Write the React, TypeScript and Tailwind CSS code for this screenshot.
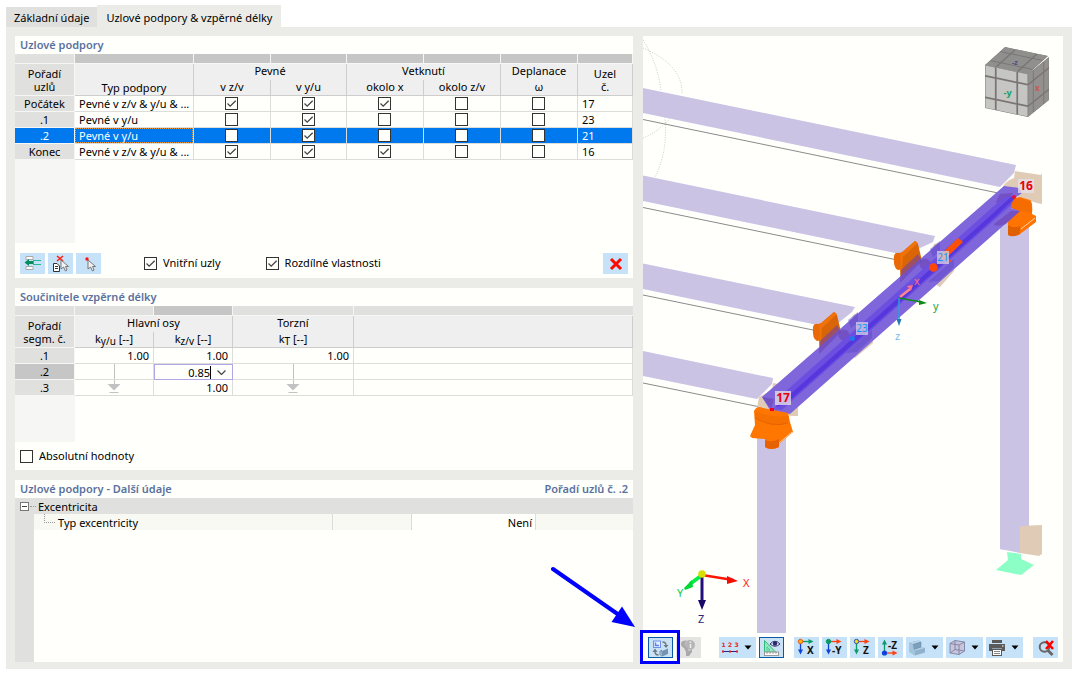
import React from "react";

type Pt = [number, number];

function Check({ id, label, checked = false }: { id?: string; label?: string; checked?: boolean }) {
  return (
    <span className="inline-grid size-[13px] shrink-0 align-top">
      <input
        id={id}
        type="checkbox"
        aria-label={label}
        defaultChecked={checked}
        className="peer [grid-area:1/1] size-[13px] appearance-none border border-[#333] bg-[#fffffc]"
      />
      <svg viewBox="0 0 13 13" className="pointer-events-none invisible [grid-area:1/1] size-[13px] peer-checked:visible">
        <path d="M2.5 6.5 L5.2 9.2 L10.7 3.7" fill="none" stroke="#444" strokeWidth="1.3" />
      </svg>
    </span>
  );
}

function ToolButton({
  label,
  children,
  drop = false,
  active = false,
  className = "",
}: {
  label: string;
  children: React.ReactNode;
  drop?: boolean;
  active?: boolean;
  className?: string;
}) {
  return (
    <button
      type="button"
      aria-label={label}
      className={
        "flex h-[21px] shrink-0 items-center justify-center " +
        (drop ? "w-[37px] gap-[5px] pr-[2px] " : "w-[25px] ") +
        (active ? "border border-[#0a5aa8] bg-[#c9e2f5] " : "bg-[#c5e2f8] ") +
        className
      }
    >
      {children}
      {drop && (
        <svg viewBox="0 0 8 5" className="h-[5px] w-2">
          <path d="M0.5 0.5H7.5L4 4.5Z" fill="#000" />
        </svg>
      )}
    </button>
  );
}

function PanelTitle({ children, right }: { children: React.ReactNode; right?: string }) {
  return (
    <h2 className="flex h-[18px] items-center justify-between px-[5px] font-semibold text-[#5a71a0]">
      <span>{children}</span>
      {right && <span>{right}</span>}
    </h2>
  );
}

const supports = [
  { order: "Počátek", type: "Pevné v z/v & y/u & ...", flags: [true, true, true, false, false], node: "17" },
  { order: ".1", type: "Pevné v y/u", flags: [false, true, false, false, false], node: "23" },
  { order: ".2", type: "Pevné v y/u", flags: [false, true, false, false, false], node: "21", selected: true },
  { order: "Konec", type: "Pevné v z/v & y/u & ...", flags: [true, true, true, false, false], node: "16" },
];
const flagNames = ["v z/v", "v y/u", "okolo x", "okolo z/v", "ω"];

const headCell = "border-r border-[#cdcdcd] p-0 font-normal ";
const subHead = headCell + "border-b align-top leading-[14px]";

function SupportsTable() {
  return (
    <table className="w-full table-fixed border-separate border-spacing-0 text-center leading-[15px]">
      <colgroup>
        <col className="w-[60px]" />
        <col className="w-[119px]" />
        <col className="w-[77px]" />
        <col className="w-[76px]" />
        <col className="w-[77px]" />
        <col className="w-[77px]" />
        <col className="w-[77px]" />
        <col />
      </colgroup>
      <thead>
        <tr aria-hidden="true" className="h-[10px]">
          <td className="border-r border-b border-[#f6f6f4] bg-[#e0e0df] p-0" />
          {[0, 1, 2, 3, 4, 5, 6].map((i) => (
            <td key={i} className="border-r border-b border-[#f6f6f4] bg-[#c6c6c6] p-0" />
          ))}
        </tr>
        <tr className="h-4 bg-[#efefef]">
          <th rowSpan={2} className="border-r border-b border-[#f6f6f4] bg-[#e0e0df] p-0 leading-[13px] font-normal">
            Pořadí
            <br />
            uzlů
          </th>
          <th rowSpan={2} className={headCell + "border-b align-bottom"}>
            Typ podpory
          </th>
          <th colSpan={2} className={headCell + "align-top leading-[14px]"}>
            Pevné
          </th>
          <th colSpan={2} className={headCell + "align-top leading-[14px]"}>
            Vetknutí
          </th>
          <th className={headCell + "align-top leading-[14px]"}>Deplanace</th>
          <th rowSpan={2} className={headCell + "border-b leading-[13px]"}>
            Uzel
            <br />
            č.
          </th>
        </tr>
        <tr className="h-4 bg-[#efefef]">
          {flagNames.map((n) => (
            <th key={n} className={subHead}>
              {n}
            </th>
          ))}
        </tr>
      </thead>
      <tbody>
        {supports.map((r) => (
          <tr key={r.order} className={r.selected ? "h-4 bg-[#0078ee] text-white" : "h-4"}>
            <th
              className={
                "border-r border-b border-[#f6f6f4] p-0 font-normal " + (r.selected ? "bg-[#0078ee]" : "bg-[#e0e0df]")
              }
            >
              {r.order}
            </th>
            <td className="border-r border-b border-[#dcdcda] p-0 text-left">
              <div
                className={
                  r.selected
                    ? "truncate pl-1 outline-1 -outline-offset-1 outline-dotted outline-[#e8963c]"
                    : "truncate pl-1"
                }
              >
                {r.type}
              </div>
            </td>
            {r.flags.map((f, i) => (
              <td key={i} className="border-r border-b border-[#dcdcda] p-0 pl-[31px] text-left leading-none">
                <Check label={r.order + " " + flagNames[i]} checked={f} />
              </td>
            ))}
            <td className="border-r border-b border-[#dcdcda] p-0 pl-1 text-left">{r.node}</td>
          </tr>
        ))}
      </tbody>
    </table>
  );
}

const seg = "border-r border-b border-[#dcdcda] p-0 pr-1";

function DownMark({ end = false }: { end?: boolean }) {
  return (
    <svg viewBox="0 0 14 15" className="mx-auto block h-[15px] w-[14px]">
      {end ? (
        <>
          <path d="M0.5 4H13.5L7 10.5Z" fill="#c2c2c2" />
          <path d="M7.5 0V4M2.5 12.5H11.5" stroke="#c2c2c2" />
        </>
      ) : (
        <path d="M7.5 0V15" stroke="#c2c2c2" />
      )}
    </svg>
  );
}

function FactorsTable() {
  const rowHead = "border-r border-b border-[#f6f6f4] p-0 text-center font-normal ";
  return (
    <table className="w-full table-fixed border-separate border-spacing-0 text-right leading-[15px]">
      <colgroup>
        <col className="w-[60px]" />
        <col className="w-[79px]" />
        <col className="w-[79px]" />
        <col className="w-[121px]" />
        <col />
      </colgroup>
      <thead className="text-center">
        <tr aria-hidden="true" className="h-[10px]">
          <td className="border-r border-b border-[#f6f6f4] bg-[#e0e0df] p-0" />
          <td className="border-r border-b border-[#f6f6f4] bg-[#e0e0df] p-0" />
          <td className="border-r border-b border-[#f6f6f4] bg-[#c6c6c6] p-0" />
          <td className="border-r border-b border-[#f6f6f4] bg-[#e0e0df] p-0" />
          <td className="border-b border-[#f6f6f4] bg-[#e0e0df] p-0" />
        </tr>
        <tr className="h-4 bg-[#efefef]">
          <th rowSpan={2} className="border-r border-b border-[#f6f6f4] bg-[#e0e0df] p-0 leading-[13px] font-normal">
            Pořadí
            <br />
            segm. č.
          </th>
          <th colSpan={2} className={headCell + "align-top leading-[14px]"}>
            Hlavní osy
          </th>
          <th className={headCell + "align-top leading-[14px]"}>Torzní</th>
          <th rowSpan={2} className={headCell + "border-b"} />
        </tr>
        <tr className="h-4 bg-[#efefef]">
          {["y/u", "z/v", "T"].map((s) => (
            <th key={s} className={subHead}>
              k<sub className="bottom-[-2px] text-[10px] leading-none">{s}</sub> [--]
            </th>
          ))}
        </tr>
      </thead>
      <tbody>
        <tr className="h-4">
          <th className={rowHead + "bg-[#e0e0df]"}>.1</th>
          <td className={seg}>1.00</td>
          <td className={seg}>1.00</td>
          <td className={seg}>1.00</td>
          <td className={seg} />
        </tr>
        <tr className="h-4">
          <th className={rowHead + "bg-[#c6c6c6]"}>.2</th>
          <td className="border-r border-b border-[#dcdcda] p-0">
            <DownMark />
          </td>
          <td className="p-0">
            <div className="flex h-4 items-center border border-[#b3a6e6]">
              <input
                aria-label="kz/v segment .2"
                defaultValue="0.85"
                className="h-[14px] w-0 min-w-0 flex-1 bg-transparent text-right outline-none"
              />
              <span className="h-[13px] w-px bg-black" />
              <button type="button" aria-label="Rozbalit" className="flex h-[14px] w-[21px] items-center justify-center">
                <svg viewBox="0 0 9 5" className="h-[5px] w-[9px]">
                  <path d="M0.5 0.5L4.5 4.5L8.5 0.5" fill="none" stroke="#444" strokeWidth="1.2" />
                </svg>
              </button>
            </div>
          </td>
          <td className="border-r border-b border-[#dcdcda] p-0">
            <DownMark />
          </td>
          <td className={seg} />
        </tr>
        <tr className="h-4">
          <th className={rowHead + "bg-[#e0e0df]"}>.3</th>
          <td className="border-r border-b border-[#dcdcda] p-0">
            <DownMark end />
          </td>
          <td className={seg}>1.00</td>
          <td className="border-r border-b border-[#dcdcda] p-0">
            <DownMark end />
          </td>
          <td className={seg} />
        </tr>
      </tbody>
    </table>
  );
}

/* One face of the navigation cube, split into 3 x 3 tiles. */
function CubeFace({ o, u, v, fill }: { o: Pt; u: Pt; v: Pt; fill: string }) {
  const at = (a: number, b: number) => `${o[0] + u[0] * a + v[0] * b},${o[1] + u[1] * a + v[1] * b}`;
  const spans: Pt[] = [
    [0.01, 0.23],
    [0.27, 0.73],
    [0.77, 0.99],
  ];
  return (
    <g>
      <polygon points={[at(0, 0), at(1, 0), at(1, 1), at(0, 1)].join(" ")} fill="#7a7473" />
      {spans.map(([a0, a1], i) =>
        spans.map(([b0, b1], j) => (
          <polygon
            key={i + "-" + j}
            points={[at(a0, b0), at(a1, b0), at(a1, b1), at(a0, b1)].join(" ")}
            fill={fill}
          />
        )),
      )}
    </g>
  );
}

function MidSupport() {
  return (
    <g>
      <path d="M894 256Q895 252 899 253L903 252V269L898 270Q893 268 894 256Z" fill="#e96a05" />
      <path d="M900 254L915 241L918 244L922 261L901 283L900 268Z" fill="#d96507" />
      <path d="M900 254L915 241L918 243L903 257L901 283Z" fill="#f07208" />
    </g>
  );
}

function Tag({ x, y, text, bold = false }: { x: number; y: number; text: string; bold?: boolean }) {
  return (
    <g>
      <rect
        x={x}
        y={y}
        width={bold ? 16 : 12}
        height={bold ? 14 : 13}
        fill={bold ? "#e6dde6" : "#cfcbe6"}
        fillOpacity="0.8"
      />
      <text
        x={x + (bold ? 8 : 6)}
        y={y + (bold ? 11 : 10)}
        textAnchor="middle"
        fontFamily="Noto Sans, sans-serif"
        fontSize={bold ? 12 : 10}
        fontWeight={bold ? 700 : 400}
        fill={bold ? "#e8000c" : "#1596f0"}
      >
        {text}
      </text>
    </g>
  );
}

function Scene() {
  return (
    <svg
      viewBox="643 36 420 597"
      preserveAspectRatio="xMidYMid meet"
      role="img"
      aria-label="Model konstrukce"
      className="min-h-0 w-full flex-1"
    >
      <g fill="none" stroke="#b9b9b5" strokeDasharray="1 1.5" strokeWidth="0.8">
        <path d="M643 40Q658 64 661 91" />
        <path d="M643 48Q683 65 682 94" />
        <path d="M643 138Q660 131 671 117" />
        <path d="M665 117Q668 152 655 177" />
      </g>
      <g fill="#cac3e4">
        <path d="M643 88L1016 165L1014 173L1000 187L643 113Z" />
        <path d="M643 175.500L935 236L933 242L905 255L643 201Z" />
        <path d="M643 263.500L855 307L852 312L832 328L643 289Z" />
        <path d="M643 351L773 378L772 384L757 399L643 376Z" />
        <path d="M757 436H786V633H757Z" />
        <path d="M1000 212H1029V553L1000 549Z" />
      </g>
      <g stroke="#7d7d7d" strokeWidth="0.9">
        <path d="M643 119.500L1003 194" />
        <path d="M643 207.500L895 259.500" />
        <path d="M643 295L813 330" />
        <path d="M643 383L770 409" />
      </g>
      <g fill="#e0cbb7">
        <path d="M1015 171L1041 175L1042 173V204L1037 203L1001 191Q1004 181 1014 178Z" />
        <path d="M1020 526L1042 525V554L1039 556L1020 553Z" />
        <path d="M773 383L798 388V416L791 416L757 408L759 397L772 390Z" />
        <path d="M853 315L858 313V322L873 335L873 343L855 358L846 350Z" />
        <path d="M934 244L939 243V252L955 265L954 271L940 287L928 280Z" />
      </g>
      <path d="M1000 480H1029V524L1020 527V553L1000 549Z" fill="#cac3e4" />
      <path d="M1007 552L1021 554V559L1034 565L1021 575L996 570L1008 560Z" fill="#8bffc5" />

      <MidSupport />
      <g transform="translate(-81 71)">
        <MidSupport />
      </g>

      <path d="M1012 198L1020 197L1030 200Q1033 202 1032 214L1036 216V222L1020 234Q1012 238 1008 234V222L1013 212Z" fill="#ff7300" />
      <path d="M1011 201Q1015 196 1031 202L1032 213Q1024 212 1011 208Z" fill="#f56c00" />
      <path d="M1008 225Q1014 229 1020 226V234Q1012 238 1008 235Z" fill="#e05f00" />
      <path d="M1021 229L1035 218" stroke="#ffd6b0" strokeWidth="1" />

      <path d="M762 397L1004 186L1019 188L1022 193L1012 200L1011 208L1020 211L790 414L770 410Z" fill="#7f66db" />
      <g fill="#6a3fae" fillOpacity="0.55">
        <path d="M996 202L1000 194L1013 193L1008 200L1000 207Z" />
        <path d="M994 224L1011 211L1020 211L1006 224Q998 227 994 225Z" />
        <circle cx="925" cy="264" r="5.500" />
        <circle cx="844" cy="335" r="5.500" />
        <path d="M900 283L922 261L918 254L901 270Z" />
        <path d="M819 354L841 332L837 325L820 341Z" />
        <path d="M762 397L774 399L771 409Z" />
      </g>
      <g fill="#6047c8" fillOpacity="0.5">
        <path d="M846 353L872 330V338L857 352Z" />
        <path d="M928 282L954 259V267L939 281Z" />
        <path d="M848 320L858 312V322L851 328Z" />
        <path d="M930 249L940 241V251L933 257Z" />
      </g>
      <path d="M774 409L786 391L1004 197L1016 196L1010 206L795 398L782 410Z" fill="#6c4fe0" />
      <path d="M776 407L990 216L1012 196L1014 199L992 220L786 404Z" fill="#5537dd" />

      <path d="M938 257L958 238L963 242L944 260Z" fill="#ff5008" />
      <circle cx="933.500" cy="267.500" r="4.300" fill="#ff4808" />
      <path d="M946 259L951 261L947 262" fill="none" stroke="#ff4808" />
      <path d="M754 411Q757 405 763 408L788 413L790 422L793 432L779 444V447Q770 451 765 447V439L752 438L750 436L755 425Z" fill="#ff7600" />
      <path d="M755 411V418Q772 427 788 423L789 416Q770 418 755 411Z" fill="#f57000" />
      <path d="M755 418Q772 428 788 423" fill="none" stroke="#e76200" />
      <path d="M779 443L792 432" stroke="#ffc48f" strokeWidth="1" />
      <path d="M765 440Q772 443 779 439V447Q771 451 765 447Z" fill="#e86100" />
      <rect x="770" y="408" width="4" height="3" fill="#f00022" />
      <circle cx="852.500" cy="338.500" r="2.500" fill="#2276ee" />
      <circle cx="1014" cy="197" r="2" fill="#e01045" />

      <g strokeWidth="1.500">
        <path d="M900 297L910 289" stroke="#ff8590" strokeWidth="2.500" />
        <path d="M907 286L913 285L911 291Z" fill="#ff7080" />
        <path d="M899 298L921 302" stroke="#0b8a17" />
        <path d="M919 300L927 303L919 305Z" fill="#0b8a17" />
        <path d="M899 298V321" stroke="#2c9be0" />
        <path d="M896.500 319H901.500L899 326Z" fill="#2179b8" />
      </g>
      <g fontFamily="Noto Sans, sans-serif" fontSize="11">
        <text x="914" y="285" fill="#ff6f86">x</text>
        <text x="933" y="310" fill="#29a33a">y</text>
        <text x="895" y="340" fill="#77bdf2">z</text>
      </g>

      <Tag x={775} y={391} text="17" bold />
      <Tag x={1018} y={179} text="16" bold />
      <Tag x={856} y={322} text="23" />
      <Tag x={937} y={251} text="21" />

      <CubeFace o={[985, 65]} u={[43, 9]} v={[0, 43]} fill="#c5c5c3" />
      <CubeFace o={[1028, 74]} u={[21, -17]} v={[0, 43]} fill="#93918f" />
      <CubeFace o={[985, 65]} u={[43, 9]} v={[20, -18]} fill="#8f8f8d" />
      <g fontFamily="Noto Sans, sans-serif" fontWeight="700">
        <text x="1003.500" y="96" fontSize="9" fill="#13a062">-y</text>
        <text x="1035" y="91" fontSize="8" fill="#c45a50">x</text>
        <text x="1012" y="65" fontSize="7" fill="#4e4e80">-z</text>
      </g>

      <path d="M702 575L733 580" stroke="#ff1500" strokeWidth="2.600" />
      <path d="M727 576L738 581L727 584Z" fill="#f01000" />
      <path d="M702 575L690 584" stroke="#00f040" strokeWidth="3.500" />
      <path d="M692 580L684 588L685 590L693 587Z" fill="#00d838" />
      <path d="M702 575V603" stroke="#21107c" strokeWidth="3" />
      <path d="M698 600H706L702 610Z" fill="#170a66" />
      <circle cx="702" cy="574" r="3.800" fill="#d6df00" />
      <g fontFamily="Noto Sans, sans-serif" fontSize="11">
        <text x="743" y="587" fill="#ff1a10">X</text>
        <text x="677" y="597" fill="#0ccb45">Y</text>
        <text x="698" y="623" fill="#2c2680">Z</text>
      </g>
    </svg>
  );
}

function AxisIcon({ across, down, dot, text, up = false }: { across: string; down: string; dot: string; text: string; up?: boolean }) {
  return (
    <svg viewBox="0 0 21 19" className="h-[19px] w-[21px]">
      {up ? (
        <>
          <path d="M4.500 15V5" stroke={down} strokeWidth="1.300" />
          <path d="M2 6.500L4.500 1.500L7 6.500Z" fill={down} />
          <path d="M5 15H13" stroke={across} strokeWidth="1.300" />
          <path d="M12.500 12.500L17.500 15L12.500 17.500Z" fill={across} />
          <circle cx="4.500" cy="15" r="2.600" fill={dot} />
        </>
      ) : (
        <>
          <path d="M4.500 4V13" stroke={down} strokeWidth="1.300" />
          <path d="M2 11.500H7L4.500 16.500Z" fill={down} />
          <path d="M5 3.500H13" stroke={across} strokeWidth="1.300" />
          <path d="M12.500 1L17.500 3.500L12.500 6Z" fill={across} />
          <circle
            cx="4.500"
            cy="3.500"
            r="2.200"
            fill={dot}
            stroke={dot === "#ffd900" ? "#2a50c0" : dot === "#ffb800" ? "#f05020" : dot}
          />
        </>
      )}
      <text
        x={text.length > 1 ? 8 : 11}
        y={up ? 10.500 : 15.500}
        fontFamily="Noto Sans, sans-serif"
        fontSize="10"
        fontWeight="700"
        fill="#111"
      >
        {text}
      </text>
    </svg>
  );
}

function ViewToolbar() {
  return (
    <div role="toolbar" aria-label="Zobrazení" className="flex h-[29px] shrink-0 items-center gap-[3px] px-[5px]">
      <div className="relative">
        <ToolButton label="Přepnout pohled" active>
          <svg viewBox="0 0 19 18" className="h-[18px] w-[19px]">
            <rect x="2.500" y="2" width="7" height="6.500" fill="#e8f1ff" stroke="#6f91ee" />
            <path d="M4.500 3.500V6.500H8" fill="none" stroke="#5b82ea" strokeWidth="1.500" />
            <path d="M11.500 3Q15 3 15 6.500" fill="none" stroke="#71787d" strokeWidth="1.400" />
            <path d="M12.500 6H17.500L15 9Z" fill="#71787d" />
            <path d="M7.500 16Q4 16 4 12.500" fill="none" stroke="#71787d" strokeWidth="1.400" />
            <path d="M1.500 13H6.500L4 9.500Z" fill="#71787d" />
            <path d="M8.500 12L11 10.500V12L17 9.500V15L11 17.500L8.500 16Z" fill="#7593b0" />
            <path d="M8.500 12L11 13V17.500L8.500 16Z" fill="#92b3cf" />
          </svg>
        </ToolButton>
        <span className="pointer-events-none absolute -top-[7px] -left-2 h-[34px] w-[40px] border-[3px] border-[#0000fe]" />
        <svg viewBox="0 0 86 62" className="pointer-events-none absolute -top-[71px] -left-[97px] h-[62px] w-[86px]">
          <path d="M2 3L68 49" stroke="#0000fe" strokeWidth="4" strokeLinecap="round" />
          <path d="M84 61L60.500 56L71 40.500Z" fill="#0000fe" />
        </svg>
      </div>
      <button type="button" disabled aria-label="Informace" className="flex h-[21px] w-[25px] items-center justify-center bg-[#e4e4e3]">
        <svg viewBox="0 0 17 18" className="h-[18px] w-[17px]">
          <circle cx="10" cy="6" r="5" fill="#b5b5b5" />
          <path d="M10.500 5V9M10.500 2.500V4" stroke="#f0f0f0" strokeWidth="1.500" />
          <path d="M1 4Q2 1 7 1.500L5 4Q4 6 7 9L9 12L12 10.500V13L9 17H6V13L4 9Q1 8 1 4Z" fill="#a9a9a9" />
        </svg>
      </button>
      <ToolButton label="Číslování" drop className="ml-[15px]">
        <svg viewBox="0 0 18 15" className="h-[15px] w-[18px]">
          <g fontFamily="DejaVu Sans, sans-serif" fontSize="6" fontWeight="700" fill="#ee2020">
            <text x="0.500" y="7">1</text>
            <text x="7" y="7">2</text>
            <text x="13.500" y="7">3</text>
          </g>
          <path d="M2 11.500H16" stroke="#28288c" />
          <path d="M1 10.500h2v2h-2zM8 10.500h2v2h-2zM15 10.500h2v2h-2z" fill="#e02020" />
        </svg>
      </ToolButton>
      <ToolButton label="Zobrazit kóty" active>
        <svg viewBox="0 0 19 18" className="h-[18px] w-[19px]">
          <path d="M2.500 1.500V13H13.500Z" fill="#8fecc0" stroke="#35b77a" />
          <path d="M5 8V11H8Z" fill="#c9e2f5" stroke="#35b77a" strokeWidth="0.700" />
          <rect x="2.500" y="13" width="14" height="3.500" fill="#fff" stroke="#999" />
          <path d="M5 13V15M8 13V15M11 13V15M14 13V15" stroke="#777" strokeWidth="0.700" />
          <path d="M8 5Q13 -0.500 18 5Q13 9.500 8 5Z" fill="#dfe4fa" stroke="#33336e" />
          <circle cx="13" cy="4.500" r="2.200" fill="#29296e" />
        </svg>
      </ToolButton>
      <ToolButton label="Pohled X" className="ml-[7px]">
        <AxisIcon across="#0c9a67" down="#1040dc" dot="#ffb800" text="X" />
      </ToolButton>
      <ToolButton label="Pohled -Y">
        <AxisIcon across="#ff4010" down="#1040dc" dot="#0c9a67" text="-Y" />
      </ToolButton>
      <ToolButton label="Pohled Z">
        <AxisIcon across="#ff4010" down="#0c9a67" dot="#ffd900" text="Z" />
      </ToolButton>
      <ToolButton label="Pohled -Z">
        <AxisIcon across="#ff4010" down="#0c9a67" dot="#1040dc" text="-Z" up />
      </ToolButton>
      <ToolButton label="Styl zobrazení" drop>
        <svg viewBox="0 0 18 17" className="h-[17px] w-[18px]">
          <path d="M1.500 3.500L11 1.500L13 3V8L17 9V13.500L7 16.500L1.500 13Z" fill="#8fb1cb" />
          <path d="M1.500 3.500L11 1.500L13 3L5 5.500ZM6 10.500L13 8L17 9L7 11.500Z" fill="#b9d3e6" />
          <path d="M5 5.500L13 3V8L6 10.500Z" fill="#7da0bd" stroke="#5f86a6" strokeWidth="0.500" />
          <path d="M1.500 3.500L5 5.500L6 10.500L7 11.500V16.500L1.500 13Z" fill="#a4c4dc" />
        </svg>
      </ToolButton>
      <ToolButton label="Obálka" drop>
        <svg viewBox="0 0 18 17" className="h-[17px] w-[18px]">
          <path d="M2 4.500L7 1.500L16.500 3V12L11 15.500L2 14Z" fill="#c6c5dc" />
          <path d="M2 4.500L11 6V15.500L2 14ZM2 4.500L7 1.500L16.500 3L11 6M16.500 3V12L11 15.500M7 1.500V10.500L2 14M7 10.500L16.500 12" fill="none" stroke="#77779a" strokeWidth="0.800" />
        </svg>
      </ToolButton>
      <ToolButton label="Tisk" drop>
        <svg viewBox="0 0 18 17" className="h-[17px] w-[18px]">
          <path d="M4 1H14V4H4ZM1 5H17V12H14V9.500H4V12H1Z" fill="#5a5a5a" />
          <rect x="4.500" y="10.500" width="9" height="6" fill="#fff" stroke="#5a5a5a" />
          <path d="M6 12.500H12M6 14.500H12" stroke="#888" />
          <path d="M14 6.500h1.500v1h-1.500z" fill="#fff" />
        </svg>
      </ToolButton>
      <ToolButton label="Zrušit výběr" className="ml-auto">
        <svg viewBox="0 0 18 18" className="h-[18px] w-[18px]">
          <circle cx="7.500" cy="8" r="4.800" fill="none" stroke="#666" strokeWidth="2" />
          <path d="M11 11.500L15.500 16" stroke="#666" strokeWidth="2.800" />
          <path d="M9 2L16 10M16 2L9 10" stroke="#ff0000" strokeWidth="2.600" />
        </svg>
      </ToolButton>
    </div>
  );
}

const cursor = "M0 0V9L2.500 7L4.500 11L6 10L4.500 6.500H7.500Z";

export default function App() {
  return (
    <div className="flex min-h-screen flex-col bg-white px-[6px] pt-[5px] pb-1 font-['Noto_Sans','Liberation_Sans',sans-serif] text-[11px] text-black">
      <div role="tablist" className="flex h-[22px] items-end">
        <button type="button" role="tab" aria-selected="false" className="h-5 bg-[#e0e0df] px-2 pt-0.5 whitespace-nowrap">
          Základní údaje
        </button>
        <button type="button" role="tab" aria-selected="true" className="h-[22px] bg-[#ebece8] px-[9px] pt-1 whitespace-nowrap">
          Uzlové podpory &amp; vzpěrné délky
        </button>
      </div>
      <main className="grid flex-1 grid-cols-[618fr_420fr] gap-[10px] bg-[#ebece8] px-[9px] pt-[9px] pb-[7px]">
        <div className="flex min-w-0 flex-col gap-[10px]">
          <section className="bg-[#fffffc]">
            <PanelTitle>Uzlové podpory</PanelTitle>
            <SupportsTable />
            <div className="h-[83px] w-[60px] bg-[#f6f6f4]" />
            <div className="flex items-center px-[5px] pt-[10px] pb-1">
              <div className="flex gap-[3px]">
                <ToolButton label="Vložit uzel">
                  <svg viewBox="0 0 18 17" className="h-[17px] w-[18px]">
                    <path d="M2 1.500H9V4.500H2ZM2 11.500H9V14.500H2Z" fill="#fff" stroke="#aaa" />
                    <path d="M9 5.500H17M9 9.500H17M9.500 5.500V9.500" fill="none" stroke="#29b68c" />
                    <path d="M0.500 7.500L5 4V6H9V9H5V11Z" fill="#078c60" />
                  </svg>
                </ToolButton>
                <ToolButton label="Odebrat výběr">
                  <svg viewBox="0 0 18 18" className="h-[18px] w-[18px]">
                    <path d="M1.500 8.500H5L7.500 11V16.500H1.500Z" fill="#fff" stroke="#333" />
                    <path d="M3 11.500H6M3 13.500H6" stroke="#333" />
                    <path d="M5 1L11 6M11 1L5 6" stroke="#ff1c10" strokeWidth="1.500" />
                    <path d={cursor} transform="translate(9 5)" fill="#f3f3f3" stroke="#777" />
                  </svg>
                </ToolButton>
                <ToolButton label="Vybrat uzel">
                  <svg viewBox="0 0 18 18" className="h-[18px] w-[18px]">
                    <path d={cursor} transform="translate(8 5)" fill="#f3f3f3" stroke="#777" />
                    <circle cx="7" cy="4" r="1.700" fill="#ff1414" />
                  </svg>
                </ToolButton>
              </div>
              <div className="ml-[43px] flex items-center gap-[6px]">
                <Check id="inner" checked />
                <label htmlFor="inner">Vnitřní uzly</label>
              </div>
              <div className="ml-[45px] flex items-center gap-[6px]">
                <Check id="diff" checked />
                <label htmlFor="diff">Rozdílné vlastnosti</label>
              </div>
              <ToolButton label="Smazat" className="ml-auto">
                <svg viewBox="0 0 14 14" className="size-[14px]">
                  <path d="M2 2L12 12M12 2L2 12" stroke="#ff0a00" strokeWidth="3" />
                </svg>
              </ToolButton>
            </div>
          </section>

          <section className="bg-[#fffffc]">
            <PanelTitle>Součinitele vzpěrné délky</PanelTitle>
            <FactorsTable />
            <div className="h-[46px] w-[60px] bg-[#f6f6f4]" />
            <div className="flex h-7 items-center gap-[6px] px-[5px]">
              <Check id="absolute" />
              <label htmlFor="absolute">Absolutní hodnoty</label>
            </div>
          </section>

          <section className="flex flex-1 flex-col bg-[#fffffc]">
            <PanelTitle right="Pořadí uzlů č. .2">Uzlové podpory - Další údaje</PanelTitle>
            <div className="flex h-4 items-center bg-[#e0e0df] pl-[5px]">
              <button type="button" aria-label="Sbalit" className="flex size-[9px] items-center justify-center border border-[#777] bg-white">
                <span className="h-px w-[5px] bg-[#444]" />
              </button>
              <span className="ml-px w-[6px] border-t border-dotted border-[#999]" />
              <span className="ml-[2px] pt-0.5">Excentricita</span>
            </div>
            <div className="flex flex-1">
              <div className="w-[19px] bg-[#e0e0df]" />
              <div className="flex h-4 flex-1 bg-[#f8f9f3] leading-[18px]">
                <div className="flex w-[299px] border-r border-[#dcdcda] pl-[10px]">
                  <span className="h-[9px] w-[11px] border-b border-l border-dotted border-[#999]" />
                  <span className="ml-[3px]">Typ excentricity</span>
                </div>
                <div className="w-[79px] border-r border-[#dcdcda]" />
                <div className="w-[124px] border-r border-[#dcdcda] bg-[#fffffc] pr-[3px] text-right">Není</div>
              </div>
            </div>
          </section>
        </div>

        <section className="flex min-w-0 flex-col bg-[#fffffc]">
          <Scene />
          <ViewToolbar />
        </section>
      </main>
    </div>
  );
}
